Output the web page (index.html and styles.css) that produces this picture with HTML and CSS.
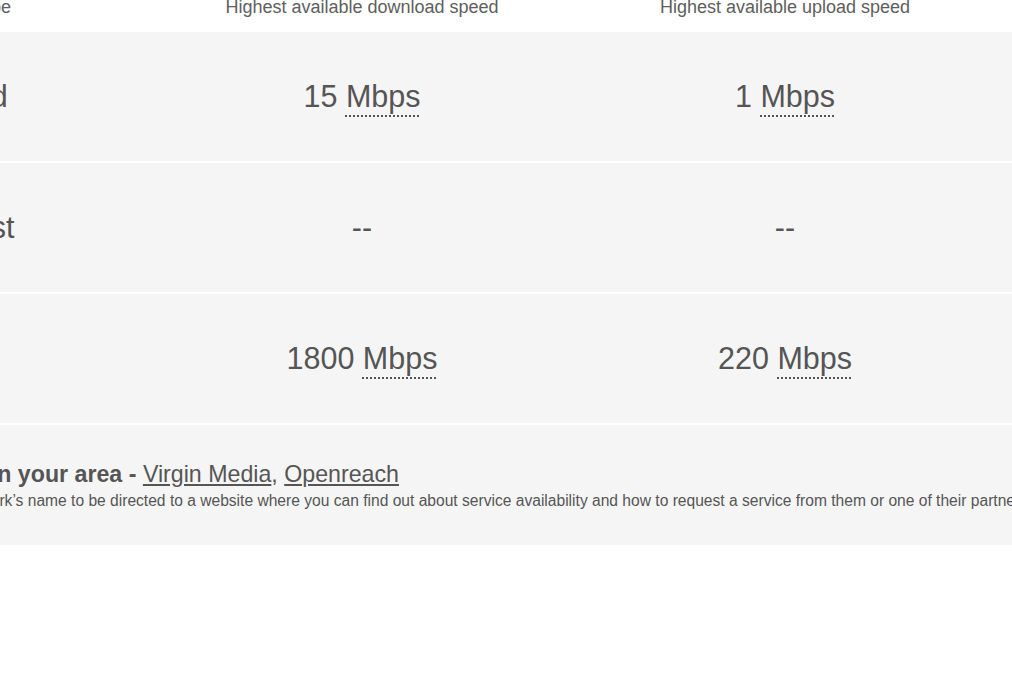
FILE: index.html
```html
<!DOCTYPE html>
<html lang="en">
<head>
<meta charset="utf-8">
<title>Broadband availability</title>
<link rel="stylesheet" href="styles.css">
</head>
<body>
<div class="table">
  <div class="row head">
    <div class="cell label">Broadband type</div>
    <div class="cell">Highest available download speed</div>
    <div class="cell">Highest available upload speed</div>
  </div>
  <div class="row">
    <div class="cell label">Standard</div>
    <div class="cell val">15 <abbr title="Megabits per second">Mbps</abbr></div>
    <div class="cell val">1 <abbr title="Megabits per second">Mbps</abbr></div>
  </div>
  <div class="row">
    <div class="cell label">Superfast</div>
    <div class="cell val">--</div>
    <div class="cell val">--</div>
  </div>
  <div class="row">
    <div class="cell label">Ultrafast</div>
    <div class="cell val">1800 <abbr title="Megabits per second">Mbps</abbr></div>
    <div class="cell val">220 <abbr title="Megabits per second">Mbps</abbr></div>
  </div>
  <div class="foot">
    <p class="networks"><strong>Networks in your area - </strong><a href="#">Virgin Media</a>, <a href="#">Openreach</a></p>
    <p class="hint">Click on a network’s name to be directed to a website where you can find out about service availability and how to request a service from them or one of their partners.</p>
  </div>
</div>
</body>
</html>
```

FILE: styles.css
```css
html, body {
  margin: 0;
  padding: 0;
  background: #ffffff;
  overflow: hidden;
}

body {
  font-family: "Liberation Sans", Arial, sans-serif;
  color: #555555;
}

.table {
  margin: -3px 0 0 -116px;
  width: 1200px;
}

.row {
  display: grid;
  grid-template-columns: 266.5px 423px 423px 1fr;
  align-items: center;
  height: 129px;
  background: #f5f5f5;
  border-bottom: 2px solid #ffffff;
}

.row.head {
  height: 35px;
  align-items: start;
  background: #ffffff;
  border-bottom: 0;
}

.head .cell {
  font-size: 18px;
  line-height: 20px;
  color: #5e5e5e;
  text-align: center;
}

.head .cell.label {
  text-align: left;
}

.cell {
  white-space: nowrap;
}

.label {
  font-size: 30.5px;
  text-align: left;
}

.val {
  font-size: 30.5px;
  text-align: center;
}

abbr {
  text-decoration: underline dotted #555555;
  text-decoration-thickness: 2px;
  text-underline-offset: 8px;
  cursor: help;
}

.foot {
  height: 120px;
  background: #f5f5f5;
  padding: 36px 0 0 0;
  box-sizing: border-box;
  white-space: nowrap;
}

.foot p {
  margin: 0;
}

.networks {
  font-size: 23.2px;
  line-height: 26px;
  margin-left: -4px !important;
}

.networks strong {
  font-weight: bold;
}

.networks a {
  color: #555555;
  text-decoration: underline;
  text-underline-offset: 2px;
}

.hint {
  margin-top: 4px !important;
  margin-left: 1px !important;
  font-size: 15.6px;
  line-height: 20px;
}
```
